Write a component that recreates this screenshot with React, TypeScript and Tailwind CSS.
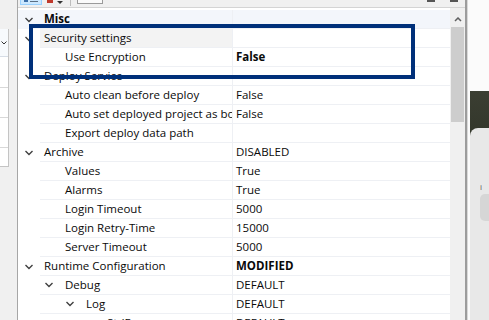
import React from 'react';

type Row = {
  name: string;
  level: number;
  value?: string;
  cat?: boolean;
  exp?: boolean;
  bold?: boolean;
  vbold?: boolean;
  tint?: 'misc' | 'hover';
};

const rows: Row[] = [
  { name: 'Misc', level: 0, cat: true, bold: true, tint: 'misc' },
  { name: 'Security settings', level: 0, cat: true, tint: 'hover' },
  { name: 'Use Encryption', level: 1, value: 'False', vbold: true },
  { name: 'Deploy Service', level: 0, cat: true },
  { name: 'Auto clean before deploy', level: 1, value: 'False' },
  { name: 'Auto set deployed project as boot project', level: 1, value: 'False' },
  { name: 'Export deploy data path', level: 1, value: '' },
  { name: 'Archive', level: 0, cat: true, value: 'DISABLED' },
  { name: 'Values', level: 1, value: 'True' },
  { name: 'Alarms', level: 1, value: 'True' },
  { name: 'Login Timeout', level: 1, value: '5000' },
  { name: 'Login Retry-Time', level: 1, value: '15000' },
  { name: 'Server Timeout', level: 1, value: '5000' },
  { name: 'Runtime Configuration', level: 0, cat: true, value: 'MODIFIED', vbold: true },
  { name: 'Debug', level: 1, exp: true, value: 'DEFAULT' },
  { name: 'Log', level: 2, exp: true, value: 'DEFAULT' },
  { name: 'StdErr', level: 3, exp: true, value: 'DEFAULT' },
];

const Chevron = () => (
  <svg width="10" height="6" viewBox="0 0 10 6" className="shrink-0">
    <path d="M1.5 1 L5 4.5 L8.5 1" fill="none" stroke="#404040" strokeWidth="1.4" />
  </svg>
);

const PropRow: React.FC<{ row: Row }> = ({ row }) => {
  const rowBg = row.tint === 'misc' ? 'bg-[#f3f6fb]' : 'bg-white';
  const nameBg = row.tint === 'hover' ? 'bg-[#f3f3f3]' : '';
  return (
    <div className={`flex h-[19px] shrink-0 ${rowBg}`}>
      <div className="w-[22px] shrink-0 flex items-center justify-center">
        {row.cat && <Chevron />}
      </div>
      <div
        className={`w-[193px] shrink-0 flex items-center overflow-hidden whitespace-nowrap border-b border-r border-[#eef0f4] pl-[4px] ${nameBg}`}
      >
        {!row.cat && (
          <div className="flex shrink-0" style={{ width: (row.level - 1) * 21 }} />
        )}
        {!row.cat && (
          <div className="w-[21px] shrink-0 flex items-center">{row.exp && <Chevron />}</div>
        )}
        <span className={row.bold ? 'font-bold' : ''}>{row.name}</span>
      </div>
      <div className="flex-1 flex items-center border-b border-[#eef0f4] pl-[3px] whitespace-nowrap overflow-hidden">
        <span className={row.vbold ? 'font-bold' : ''}>{row.value}</span>
      </div>
    </div>
  );
};

export default function App() {
  return (
    <div
      className="relative flex w-[489px] h-[320px] overflow-hidden bg-white text-[#0a0a0a] text-[11.5px]"
      style={{ fontFamily: '"Open Sans", "Noto Sans", sans-serif' }}
    >
      {/* left side panel */}
      <div className="w-[17px] shrink-0 flex flex-col bg-[#f0f0f0]">
        <div className="h-[29px] shrink-0" />
        <div className="w-[9px] h-[138px] flex flex-col bg-white border-r border-b border-[#c4c4c4]">
          <div className="h-[28px] flex items-center border-b border-[#d6dde6] bg-[#f7fafd]">
            <svg width="6" height="4" viewBox="0 0 6 4" className="ml-[1px]">
              <path d="M0.5 0.5 L3 3 L5.5 0.5" fill="none" stroke="#333" strokeWidth="1" />
            </svg>
          </div>
          <div className="h-[31px] border-b border-[#d8d8d8]" />
          <div className="h-[30px] border-b border-[#d8d8d8]" />
          <div className="h-[30px] border-b border-[#d8d8d8]" />
        </div>
      </div>
      <div className="w-px shrink-0 bg-[#a6a6a6]" />

      {/* property grid */}
      <div className="flex flex-col w-[447px] shrink-0">
        <div className="h-[8px] shrink-0 flex items-start bg-[#f0f0f0] border-b border-[#d4d4d4]">
          <div className="ml-[2px] w-[22px] h-[5px] bg-[#cce8ff] border border-t-0 border-[#99d1ff] flex items-start gap-[2px] px-[3px]">
            <div className="w-[4px] h-[2px] bg-[#3c6fa8]" />
            <div className="w-[8px] h-[1px] mt-[1px] bg-[#5a6f85]" />
          </div>
          <div className="ml-[5px] w-[6px] h-[3px] bg-[#c0392b]" />
          <svg width="6" height="4" viewBox="0 0 6 4" className="ml-[4px] mt-[1px]">
            <path d="M0 0 L6 0 L3 3 Z" fill="#333" />
          </svg>
          <div className="ml-[7px] w-px h-[6px] bg-[#bdbdbd]" />
          <div className="ml-[6px] w-[26px] h-[4px] bg-[#fafafa] border border-t-0 border-[#9a9a9a]" />
          <div className="flex-1" />
          <div className="w-[8px] h-[2px] bg-[#555]" />
          <div className="ml-[15px] mr-[7px] w-[8px] h-[2px] bg-[#555]" />
        </div>
        <div className="flex flex-1 min-h-0">
          <div className="w-[432px] shrink-0 flex flex-col pt-[2px] bg-white">
            {rows.map((r) => (
              <PropRow key={r.name} row={r} />
            ))}
          </div>
          <div className="w-[15px] shrink-0 flex flex-col items-center bg-[#f0f0f0]">
            <svg width="8" height="5" viewBox="0 0 8 5" className="mt-[9px]">
              <path d="M1 4 L4 1 L7 4" fill="none" stroke="#606060" strokeWidth="1.5" />
            </svg>
            <div className="mt-[5px] w-[13px] h-[95px] bg-[#cdcdcd]" />
          </div>
        </div>
      </div>

      {/* window border */}
      <div className="w-[2px] shrink-0 bg-[#9c9c9c]" />
      <div className="w-px shrink-0 bg-[#d9d9d9]" />

      {/* desktop behind */}
      <div className="flex-1 flex flex-col pl-[2px] bg-[#fbfbfb]">
        <div className="h-[91px] shrink-0" />
        <div className="h-[37px] shrink-0 bg-gradient-to-b from-[#3b3e32] to-[#34382c]" />
        <div className="flex-1 flex flex-col bg-[#34382c]">
          <div className="flex-1 flex flex-col rounded-tl-[8px] bg-[#e8e8e8] pl-[10px]">
            <div className="h-[55px]" />
            <span className="text-[8px] leading-[8px] text-[#555]">i</span>
            <div className="mt-[3px] h-[27px] rounded-l-[5px] bg-[#d6d6d6]" />
            <div className="mt-[12px] ml-[10px] w-[2px] h-[6px] bg-[#f0c060]" />
            <div className="mt-[24px] ml-[10px] w-[2px] h-[6px] bg-[#f0c060]" />
            <div className="mt-[24px] ml-[10px] w-[2px] h-[6px] bg-[#f0c060]" />
          </div>
        </div>
      </div>

      {/* highlight box */}
      <div className="absolute left-[29px] top-[24px] w-[386px] h-[55px] border-4 border-[#00307a]" />
    </div>
  );
}
